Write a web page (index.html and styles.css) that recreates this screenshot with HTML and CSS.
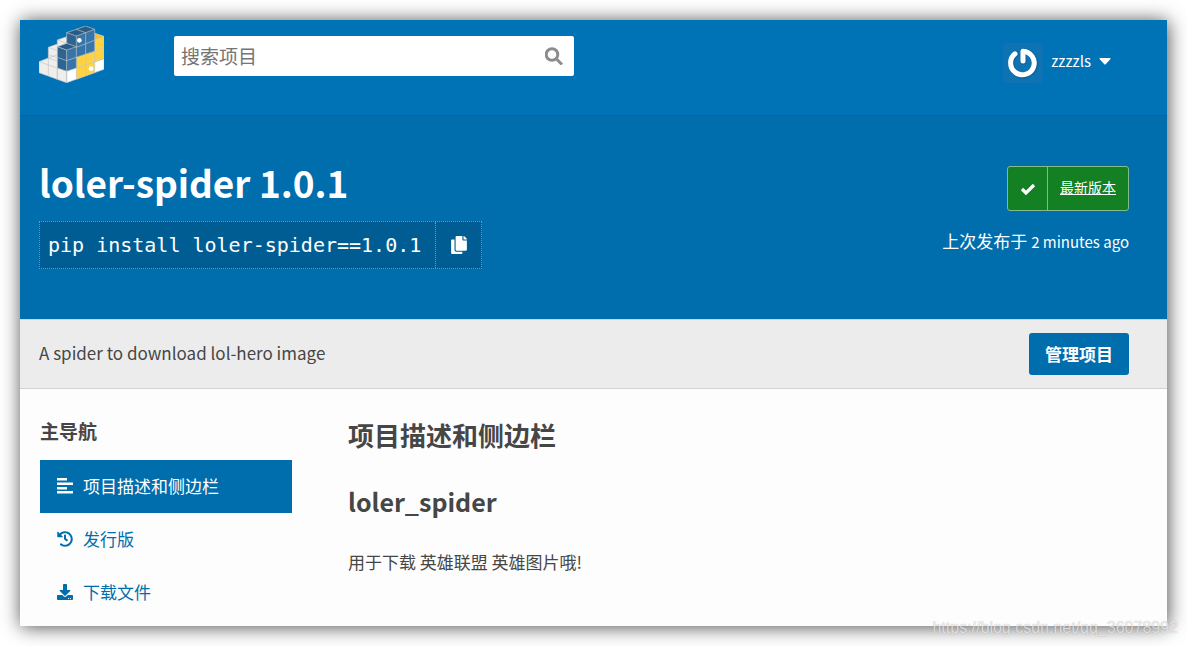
FILE: index.html
```
<!DOCTYPE html>
<html lang="zh-CN">
	<head>
		<meta charset="UTF-8">
		<title>loler-spider · PyPI</title>
		<link rel="stylesheet" href="styles.css">
	</head>
	<body>
		<div class="page">
			<header class="header">
				<a class="logo" href="#" aria-label="PyPI">
					<svg viewBox="117 78 195 171" width="65" height="57">
						<polygon fill="#efeeea" points="117,185 145,174 145,142 172,132 172,120 200,110 200,248 117,218"/>
						<polygon fill="#fff" points="200,213 312,176 312,208 200,248"/>
						<polygon fill="#ffd242" points="229,172 284,154 284,100 312,109 312,176 284,186 284,218 229,238"/>
						<polygon fill="#f5bf2b" points="284,100 312,109 284,119"/>
						<polygon fill="#3775a9" points="200,150 229,140 229,108 284,88 284,154 229,172 229,204 200,214"/>
						<polygon fill="#2f6491" points="172,140 200,150 200,214 172,204"/>
						<polygon fill="#2f6491" points="200,98 229,108 229,142 200,132"/>
						<polygon fill="#2b5b84" points="172,140 200,130 229,140 200,150"/>
						<polygon fill="#2b5b84" points="200,98 257,78 284,88 229,108"/>
						<g fill="none" stroke="#c3c5cc" stroke-width="2">
							<path d="M117 185L172 204V238M145 174L172 183M145 142L172 152M145 164L172 173M172 120L200 130M117 185V218L200 248L312 208V109L284 100M145 142V228M172 120V238M200 213V248"/>
							<path d="M145 174L117 185M145 142L172 132M172 120L200 110M145 174L172 164"/>
							<path d="M172 204L200 214L312 176M172 172L200 182L312 143M284 119L312 109M229 142L284 121"/>
							<path d="M229 140V238M257 98V228M284 88V218M200 150V248"/>
							<path d="M172 140L200 150L229 140L200 130ZM200 98L229 108L284 88L257 78ZM229 88L257 98M200 98V132M229 108V142"/>
						</g>
						<circle cx="238" cy="121" r="7" fill="#fff"/>
						<circle cx="273" cy="206" r="7" fill="#fff"/>
					</svg>
				</a>
				<form class="search" action="" method="get">
					<input type="text" name="q" id="search" placeholder="搜索项目" aria-label="搜索项目">
					<button type="submit" aria-label="搜索">
						<svg viewBox="0 0 18 18" width="18" height="18" fill="none" stroke="#8c8c8c" stroke-width="3">
							<circle cx="7" cy="7.500" r="5.800"/>
							<path d="M11 11.500L17 17.500"/>
						</svg>
					</button>
				</form>
				<button class="user" type="button">
					<svg class="avatar" viewBox="0 0 40 40" width="40" height="40">
						<rect width="40" height="40" rx="4" fill="#0f72b3"/>
						<path d="M13 11A12 12 0 1 0 20.500 8.500V18.500" fill="none" stroke="#0a568a" stroke-opacity=".4" stroke-width="6.500" stroke-linecap="round" stroke-linejoin="round"/>
						<path d="M12 10.800A11.800 11.800 0 1 0 20 8.200V18" fill="none" stroke="#fff" stroke-width="5" stroke-linecap="round" stroke-linejoin="round"/>
					</svg>
					<span>zzzzls</span>
					<svg class="caret" viewBox="0 0 12 7" width="12" height="7"><path d="M1 0H11Q12 .5 11.300 1.300L6.700 6.200Q6 7 5.300 6.200L.7 1.300Q0 .5 1 0Z" fill="#fff"/></svg>
				</button>
			</header>

			<section class="banner">
				<div class="package">
					<h1>loler-spider 1.0.1</h1>
					<div class="pip">
						<code>pip install loler-spider==1.0.1</code>
						<button type="button" aria-label="复制">
							<svg viewBox="0 0 448 512" width="16" height="18" fill="#fff"><path d="M320 448v40c0 13-11 24-24 24H24c-13 0-24-11-24-24V120c0-13 11-24 24-24h72v296c0 31 25 56 56 56zm0-344V0H152c-13 0-24 11-24 24v368c0 13 11 24 24 24h272c13 0 24-11 24-24V128H344c-13 0-24-11-24-24zm121-31L375 7a24 24 0 0 0-17-7h-6v96h96v-6a24 24 0 0 0-7-17z"/></svg>
						</button>
					</div>
				</div>
				<div class="release">
					<a class="status" href="#">
						<span class="tick"><svg viewBox="0 0 16 12" width="16" height="12"><path d="M2 6L6 10L14 2" fill="none" stroke="#fff" stroke-width="3.200"/></svg></span>
						<span class="status-text">最新版本</span>
					</a>
					<p>上次发布于 <span class="latin">2 minutes ago</span></p>
				</div>
			</section>

			<section class="summary">
				<p>A spider to download lol-hero image</p>
				<button type="button">管理项目</button>
			</section>

			<div class="content">
				<nav class="sidebar">
					<h3>主导航</h3>
					<a class="active" href="#">
						<svg viewBox="0 0 16 16" width="16" height="16" fill="currentColor"><path d="M0 0H10V2.500H0ZM0 4.500H16V7H0ZM0 9H10V11.500H0ZM0 13H16V15.500H0Z"/></svg>
						项目描述和侧边栏
					</a>
					<a href="#">
						<svg viewBox="0 0 512 512" width="16" height="16" fill="currentColor"><path d="M504 255.500C504.300 392 392.800 504 256.200 504c-59 0-113.200-20.500-155.800-54.900-11-8.900-11.900-25.400-1.800-35.400l11.300-11.300c8.600-8.600 22.400-9.600 32-2C173.100 425.100 212.900 440 256 440c101.700 0 184-82.300 184-184 0-101.700-82.300-184-184-184-48.800 0-93.100 19-126.100 49.900l50.800 50.800c10 10.100 2.900 27.300-11.400 27.300H24c-8.800 0-16-7.200-16-16V38.600c0-14.300 17.200-21.400 27.300-11.400l49.400 49.400C129.200 34.100 189.600 8 256 8c136.800 0 247.700 110.800 248 247.500zM323.100 334.500l19.600-25.200c8.200-10.500 6.300-25.500-4.200-33.700L288 236.300V136c0-13.300-10.700-24-24-24h-16c-13.300 0-24 10.700-24 24v131.700l75.400 58.700c10.500 8.200 25.600 6.300 33.700-4.200z"/></svg>
						发行版
					</a>
					<a href="#">
						<svg viewBox="0 0 512 512" width="16" height="16" fill="currentColor"><path d="M216 0h80c13.300 0 24 10.700 24 24v168h87.700c17.800 0 26.700 21.500 14.100 34.100L269.700 378.300c-7.500 7.500-19.800 7.500-27.300 0L90.100 226.100c-12.600-12.600-3.700-34.100 14.100-34.100H192V24c0-13.300 10.700-24 24-24zm296 376v112c0 13.300-10.700 24-24 24H24c-13.300 0-24-10.700-24-24V376c0-13.300 10.700-24 24-24h146.700l49 49c20.100 20.100 52.500 20.100 72.600 0l49-49H488c13.300 0 24 10.700 24 24zm-124 88c0-11-9-20-20-20s-20 9-20 20 9 20 20 20 20-9 20-20zm64 0c0-11-9-20-20-20s-20 9-20 20 9 20 20 20 20-9 20-20z"/></svg>
						下载文件
					</a>
				</nav>
				<main class="description">
					<h2>项目描述和侧边栏</h2>
					<h2 class="readme-title">loler_spider</h2>
					<p>用于下载 英雄联盟 英雄图片哦!</p>
				</main>
			</div>
		</div>
		<div class="watermark">https://blog.csdn.net/qq_36078992</div>
	</body>
</html>
```
FILE: styles.css
```
*{
	box-sizing: border-box;
}
body{
	margin: 0;
	padding: 20px;
	position: relative;
	background-color: #fff;
	color: #464646;
	font: 17px/24px "Noto Sans CJK SC", sans-serif;
}
h1,h2,h3,p{
	margin: 0;
}
button,input{
	font: inherit;
	border: none;
	padding: 0;
}
button{
	cursor: pointer;
}
a{
	color: #006dad;
	text-decoration: none;
}
svg{
	display: block;
	flex: none;
}
.page{
	background-color: #fdfdfd;
	box-shadow: 1px 1px 18px rgba(0,0,0,.7);
}

/* header */
.header{
	display: flex;
	align-items: flex-start;
	padding: 6px 56px 32px 19px;
	background-color: #0073b7;
	border-bottom: 1px solid #0067a3;
}
.search{
	display: flex;
	align-items: center;
	width: 400px;
	height: 40px;
	margin: 10px auto 0 70px;
	padding: 0 11px 0 7px;
	background-color: #fff;
	border-radius: 2px;
}
.search input{
	flex: 1;
	min-width: 0;
	height: 38px;
	padding-bottom: 2px;
	font-size: 19px;
	background: none;
	outline: none;
}
.search input::placeholder{
	color: #757575;
}
.search button{
	background: none;
}
.user{
	display: flex;
	align-items: center;
	gap: 8px;
	margin-top: 17px;
	color: #fff;
	font-size: 15px;
	line-height: 20px;
	background: none;
}
.user span,.user .caret{
	margin-bottom: 4px;
}

/* banner */
.banner{
	display: flex;
	justify-content: space-between;
	padding: 42px 38px 50px 19px;
	background-color: #006dad;
	color: #fff;
}
.banner h1{
	margin-bottom: 15px;
	font-size: 37px;
	line-height: 48px;
}
.pip{
	display: flex;
	width: 443px;
	height: 48px;
	background-color: #005d93;
	border: 1px dotted #5c9dc6;
}
.pip code{
	flex: 1;
	padding-left: 8px;
	font: 20px/46px "DejaVu Sans Mono", monospace;
}
.pip button{
	display: flex;
	align-items: center;
	justify-content: center;
	width: 46px;
	background: none;
	border-left: 1px dotted #5c9dc6;
}
.release{
	display: flex;
	flex-direction: column;
	align-items: flex-end;
	gap: 18px;
	padding-top: 8px;
}
.status{
	display: flex;
	height: 45px;
	background-color: #148024;
	border: 1px solid #84bb8c;
	border-radius: 3px;
	color: #fff;
	font-size: 14px;
	line-height: 41px;
}
.tick{
	display: flex;
	align-items: center;
	justify-content: center;
	width: 40px;
	border-right: 1px solid #84bb8c;
}
.status-text{
	padding: 0 12px;
	text-decoration: underline;
}
.latin{
	font-size: 15px;
}

/* summary bar */
.summary{
	display: flex;
	align-items: center;
	justify-content: space-between;
	padding: 13px 38px 13px 19px;
	background-color: #ececec;
	border-top: 1px solid #d3d3d3;
	border-bottom: 1px solid #d3d3d3;
}
.summary p{
	padding-bottom: 2px;
}
.summary button{
	width: 100px;
	height: 42px;
	background-color: #006dad;
	border-radius: 3px;
	color: #fff;
	font-weight: bold;
}

/* content */
.content{
	display: flex;
	gap: 56px;
	padding: 29px 38px 7px 20px;
}
.sidebar{
	width: 252px;
}
.sidebar h3{
	margin-bottom: 16px;
	font-size: 19px;
	line-height: 26px;
}
.sidebar a{
	display: flex;
	align-items: center;
	gap: 10px;
	height: 53px;
	padding: 0 0 2px 17px;
}
.sidebar .active{
	background-color: #006dad;
	color: #fff;
}
.description{
	flex: 1;
}
.description h2{
	font-size: 26px;
	line-height: 34px;
}
.description .readme-title{
	margin: 32px 0;
	font-size: 25px;
}

.watermark{
	position: absolute;
	right: 9px;
	bottom: 8px;
	color: rgba(255,255,255,.7);
	font: 16px/20px "Liberation Sans", sans-serif;
	text-shadow: 0 0 1px rgba(0,0,0,.3);
}
```
